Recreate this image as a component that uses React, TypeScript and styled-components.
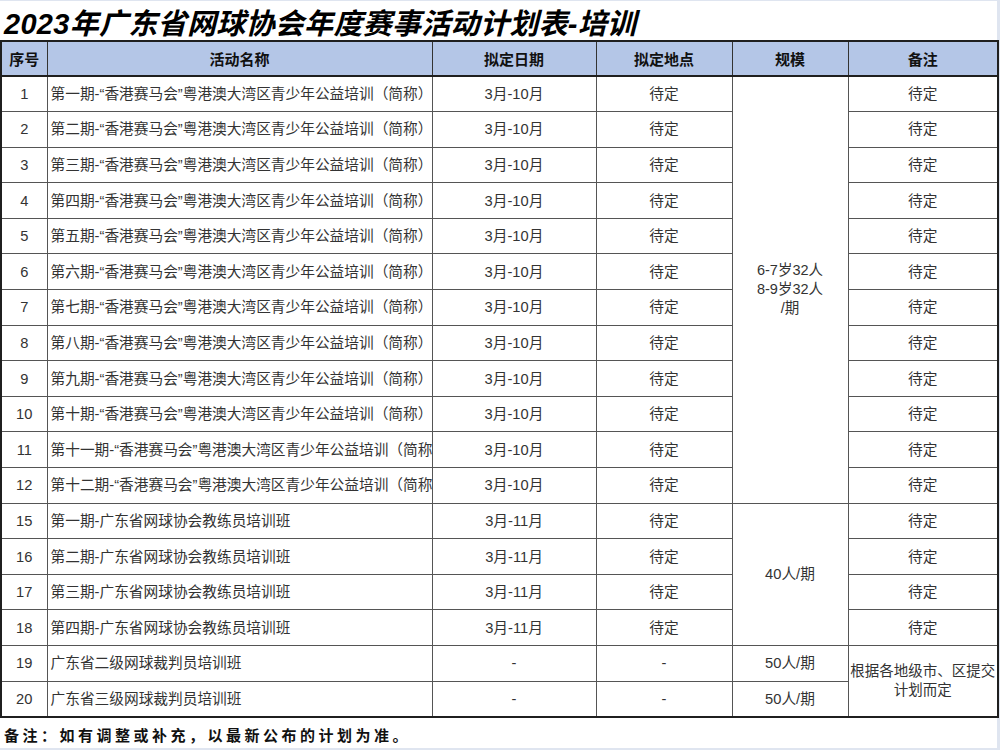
import React from "react";
import styled, { createGlobalStyle } from "styled-components";

const Global = createGlobalStyle`
  html, body { margin: 0; padding: 0; background: #dfe5f0; }
  body { font-family: "Liberation Sans", "Noto Sans CJK SC", sans-serif; }
`;

const Page = styled.div`
  width: 1000px;
  height: 750px;
  box-sizing: border-box;
  padding: 1px 3px 2px 0;
  display: flex;
  flex-direction: column;
  background: #dfe5f0;
`;

const Sheet = styled.div`
  background: #ffffff;
  display: flex;
  flex-direction: column;
`;

const Title = styled.h1`
  margin: 0;
  height: 39px;
  display: flex;
  align-items: center;
  padding-left: 4px;
  font-family: "Liberation Sans", "Noto Sans CJK SC", sans-serif;
  font-size: 29px;
  font-weight: 700;
  font-style: italic;
  color: #000;
  letter-spacing: 0.3px;
`;

const Table = styled.table`
  width: 997px;
  border-collapse: collapse;
  table-layout: fixed;
  border: 2px solid #1f1f1f;
`;

const HeadCell = styled.th`
  height: 33px;
  background: #b4c6e7;
  border: 1px solid #333;
  border-bottom: 2px solid #1f1f1f;
  font-size: 15px;
  font-weight: 700;
  color: #111;
  text-align: center;
  padding: 0;
  font-family: "Liberation Sans", "Noto Sans CJK SC", sans-serif;
`;

const Row = styled.tr`
  height: 35.6px;
`;

const Cell = styled.td<{ $align?: "left" | "center" }>`
  border: 1px solid #555;
  padding: 0;
  padding-left: ${(p) => (p.$align === "left" ? "3px" : "0")};
  text-align: ${(p) => p.$align ?? "center"};
  font-size: 14.7px;
  color: #333;
  white-space: nowrap;
  overflow: hidden;
  line-height: 18px;
`;

const WrapCell = styled(Cell)`
  white-space: normal;
  line-height: 19px;
  padding: 0 1px;
  font-size: 14.5px;
`;

const Footer = styled.div`
  height: 28px;
  display: flex;
  align-items: center;
  padding-left: 4px;
  margin-top: 2px;
  font-family: "Noto Sans CJK SC", sans-serif;
  font-size: 15px;
  font-weight: 700;
  letter-spacing: 3.5px;
  color: #111;
`;

const Gap = styled.div`
  height: 2px;
  background: #dfe5f0;
`;

const nums = ["一", "二", "三", "四", "五", "六", "七", "八", "九", "十", "十一", "十二"];

export default function App() {
  return (
    <>
      <Global />
      <Page>
        <Sheet>
          <Title>2023年广东省网球协会年度赛事活动计划表-培训</Title>
          <Table>
            <colgroup>
              <col style={{ width: 46 }} />
              <col style={{ width: 385 }} />
              <col style={{ width: 164 }} />
              <col style={{ width: 136 }} />
              <col style={{ width: 116 }} />
              <col style={{ width: 150 }} />
            </colgroup>
            <thead>
              <tr>
                <HeadCell>序号</HeadCell>
                <HeadCell>活动名称</HeadCell>
                <HeadCell>拟定日期</HeadCell>
                <HeadCell>拟定地点</HeadCell>
                <HeadCell>规模</HeadCell>
                <HeadCell>备注</HeadCell>
              </tr>
            </thead>
            <tbody>
              {nums.map((n, i) => (
                <Row key={n}>
                  <Cell>{i + 1}</Cell>
                  <Cell $align="left">第{n}期-“香港赛马会”粤港澳大湾区青少年公益培训（简称）</Cell>
                  <Cell>3月-10月</Cell>
                  <Cell>待定</Cell>
                  {i === 0 && (
                    <WrapCell rowSpan={12}>
                      6-7岁32人
                      <br />
                      8-9岁32人
                      <br />
                      /期
                    </WrapCell>
                  )}
                  <Cell>待定</Cell>
                </Row>
              ))}
              {["一", "二", "三", "四"].map((n, i) => (
                <Row key={"c" + n}>
                  <Cell>{15 + i}</Cell>
                  <Cell $align="left">第{n}期-广东省网球协会教练员培训班</Cell>
                  <Cell>3月-11月</Cell>
                  <Cell>待定</Cell>
                  {i === 0 && <Cell rowSpan={4}>40人/期</Cell>}
                  <Cell>待定</Cell>
                </Row>
              ))}
              <Row>
                <Cell>19</Cell>
                <Cell $align="left">广东省二级网球裁判员培训班</Cell>
                <Cell>-</Cell>
                <Cell>-</Cell>
                <Cell>50人/期</Cell>
                <WrapCell rowSpan={2}>根据各地级市、区提交计划而定</WrapCell>
              </Row>
              <Row>
                <Cell>20</Cell>
                <Cell $align="left">广东省三级网球裁判员培训班</Cell>
                <Cell>-</Cell>
                <Cell>-</Cell>
                <Cell>50人/期</Cell>
              </Row>
            </tbody>
          </Table>
        </Sheet>
        <Gap />
        <Sheet>
          <Footer>备注：如有调整或补充，以最新公布的计划为准。</Footer>
        </Sheet>
      </Page>
    </>
  );
}
